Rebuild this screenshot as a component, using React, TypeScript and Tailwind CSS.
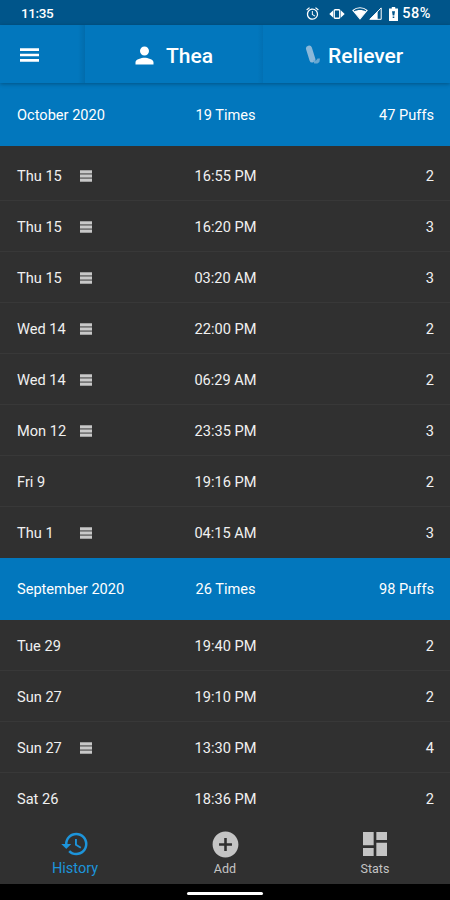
import clsx from "clsx";
import type { ReactNode } from "react";
import { MdAddCircle, MdAlarm, MdDashboard, MdHistory, MdPerson } from "react-icons/md";

type Entry = {
  day: string;
  time: string;
  puffs: number;
  note?: boolean;
};

type Month = {
  name: string;
  times: number;
  puffs: number;
  entries: Entry[];
};

const MONTHS: Month[] = [
  {
    name: "October 2020",
    times: 19,
    puffs: 47,
    entries: [
      { day: "Thu 15", time: "16:55 PM", puffs: 2, note: true },
      { day: "Thu 15", time: "16:20 PM", puffs: 3, note: true },
      { day: "Thu 15", time: "03:20 AM", puffs: 3, note: true },
      { day: "Wed 14", time: "22:00 PM", puffs: 2, note: true },
      { day: "Wed 14", time: "06:29 AM", puffs: 2, note: true },
      { day: "Mon 12", time: "23:35 PM", puffs: 3, note: true },
      { day: "Fri 9", time: "19:16 PM", puffs: 2 },
      { day: "Thu 1", time: "04:15 AM", puffs: 3, note: true },
    ],
  },
  {
    name: "September 2020",
    times: 26,
    puffs: 98,
    entries: [
      { day: "Tue 29", time: "19:40 PM", puffs: 2 },
      { day: "Sun 27", time: "19:10 PM", puffs: 2 },
      { day: "Sun 27", time: "13:30 PM", puffs: 4, note: true },
      { day: "Sat 26", time: "18:36 PM", puffs: 2 },
    ],
  },
];

function StatusBar() {
  return (
    <div className="flex h-[25px] shrink-0 items-center bg-[#00558a] pt-0.5 pr-[19px] pl-[21px] text-white">
      <span className="text-[13.5px] leading-none font-medium tracking-[-0.4px]">11:35</span>
      <MdAlarm className="ml-auto size-[15px]" />
      <svg className="ml-[9px] h-3 w-4" viewBox="0 0 16 12" fill="none" stroke="currentColor">
        <rect x="5.2" y="1.7" width="5.6" height="8.6" rx="1" strokeWidth="1.4" />
        <path d="M4 2.4v7.2L0.3 6zM12 2.4v7.2L15.7 6z" fill="currentColor" stroke="none" />
      </svg>
      <svg className="ml-[7px] h-[13px] w-4" viewBox="0 0 16 13">
        <path
          d="M0.9 3.4C5 -0.1 11 -0.1 15.1 3.4L8 12z"
          fill="none"
          stroke="currentColor"
          strokeWidth="1.1"
        />
        <path d="M2 4.4C5.4 2.4 10.6 2.4 14 4.4L8 11.7z" fill="currentColor" />
      </svg>
      <svg className="ml-px h-[13px] w-[13px]" viewBox="0 0 13 13">
        <path d="M0.8 12.3L12.2 0.9v11.4z" fill="none" stroke="currentColor" />
        <path d="M0.8 12.3L8.6 4.5v7.8z" fill="currentColor" />
      </svg>
      <svg className="ml-[7px] h-[14px] w-[9px]" viewBox="0 0 9 14">
        <path d="M2.8 0h3.4v1.4H9V14H0V1.4h2.8z" fill="currentColor" />
        <path d="M3 4.2h3L5.3 8.4H3.7zM3.7 9.4h1.6V11H3.7z" fill="#00558a" />
      </svg>
      <span className="mt-0.5 ml-[4px] text-[14.5px] leading-none font-medium tracking-[0.5px]">58%</span>
    </div>
  );
}

function AppBar() {
  return (
    <header className="relative z-10 flex h-[58px] shrink-0 bg-[#0277bd] text-white shadow-[0_1px_4px_rgba(0,0,0,0.3)]">
      <button className="flex w-[85px] items-center bg-linear-to-r from-[#0277bd] from-92% to-[#026cac] pt-0.5 pl-5">
        <svg className="h-[14px] w-[19px]" viewBox="0 0 19 14" fill="currentColor">
          <path d="M0 0.3h19v2.6H0zM0 5.7h19v2.6H0zM0 11.1h19v2.6H0z" />
        </svg>
      </button>
      <button className="flex w-[178px] items-center bg-linear-to-r from-[#0277bd] from-97% to-[#0270b3] pt-0.5 pl-[46px]">
        <MdPerson className="size-[27px]" />
        <span className="mt-0.5 ml-[8px] text-[21px] leading-none font-medium">Thea</span>
      </button>
      <button className="flex flex-1 items-center pt-0.5 pl-[42px]">
        <svg className="-mt-0.5 h-[19px] w-[16px]" viewBox="0 0 16 19">
          <path d="M4 3.5L7.4 14.5" stroke="#8bb8d9" strokeWidth="6" strokeLinecap="round" />
          <path d="M8.2 15.2L11 15.6L12.6 13.6L15 13.4L14.4 17L12.4 18.6H9.2z" fill="#68a8d2" />
        </svg>
        <span className="mt-0.5 ml-[7px] text-[21px] leading-none font-medium">Reliever</span>
      </button>
    </header>
  );
}

function MonthHeader({ month }: { month: Month }) {
  return (
    <div className="grid h-[62px] grid-cols-3 items-center bg-[#0277bd] pt-0.5 pr-4 pl-[17px] text-white">
      <span>{month.name}</span>
      <span className="text-center">{month.times} Times</span>
      <span className="text-right">{month.puffs} Puffs</span>
    </div>
  );
}

function EntryRow({ entry }: { entry: Entry }) {
  return (
    <li className="grid h-[51px] grid-cols-3 items-center border-b border-[#383838] pt-1 pr-4 pl-[17px] last:border-transparent">
      <div className="flex items-center">
        <span className="w-[63px]">{entry.day}</span>
        {entry.note ? (
          <svg className="-mt-0.5 h-3 w-3" viewBox="0 0 12 12" fill="#c8c8c8">
            <path d="M0 0h12v12H0z" fill="#777" />
            <path d="M0 0.5h12v2.6H0zM0 4.7h12v2.6H0zM0 8.9h12v2.6H0z" />
          </svg>
        ) : null}
      </div>
      <span className="text-center">{entry.time}</span>
      <span className="text-right">{entry.puffs}</span>
    </li>
  );
}

function NavItem({ icon, label, active }: { icon: ReactNode; label: string; active?: boolean }) {
  return (
    <button
      className={clsx(
        "flex flex-1 flex-col items-center pt-[5px]",
        active ? "text-[#1d94da]" : "text-[#c4c4c4]",
      )}
    >
      {icon}
      <span className={clsx("leading-4", active ? "mt-0.5 text-[14.5px]" : "mt-px text-[12.5px]")}>
        {label}
      </span>
    </button>
  );
}

export default function App() {
  return (
    <div className="flex h-[900px] w-[450px] flex-col overflow-hidden bg-[#303030] font-['Roboto',sans-serif]">
      <StatusBar />
      <AppBar />
      <main className="min-h-0 flex-1 overflow-hidden bg-[#0277bd] pt-px text-[14.6px] text-[#f0f0f0]">
        {MONTHS.map((month, i) => (
          <section key={month.name} className="bg-[#303030]">
            <MonthHeader month={month} />
            <ul className={clsx(i === 0 && "pt-1")}>
              {month.entries.map((entry) => (
                <EntryRow key={entry.time} entry={entry} />
              ))}
            </ul>
          </section>
        ))}
      </main>
      <nav className="flex h-[60px] shrink-0 bg-[#303030]">
        <NavItem icon={<MdHistory className="size-[30px]" />} label="History" active />
        <NavItem icon={<MdAddCircle className="size-[31px]" />} label="Add" />
        <NavItem icon={<MdDashboard className="-mt-px size-[32px]" />} label="Stats" />
      </nav>
      <div className="flex h-4 shrink-0 items-center justify-center bg-black pt-0.5">
        <div className="h-[3px] w-[76px] rounded-full bg-white" />
      </div>
    </div>
  );
}
